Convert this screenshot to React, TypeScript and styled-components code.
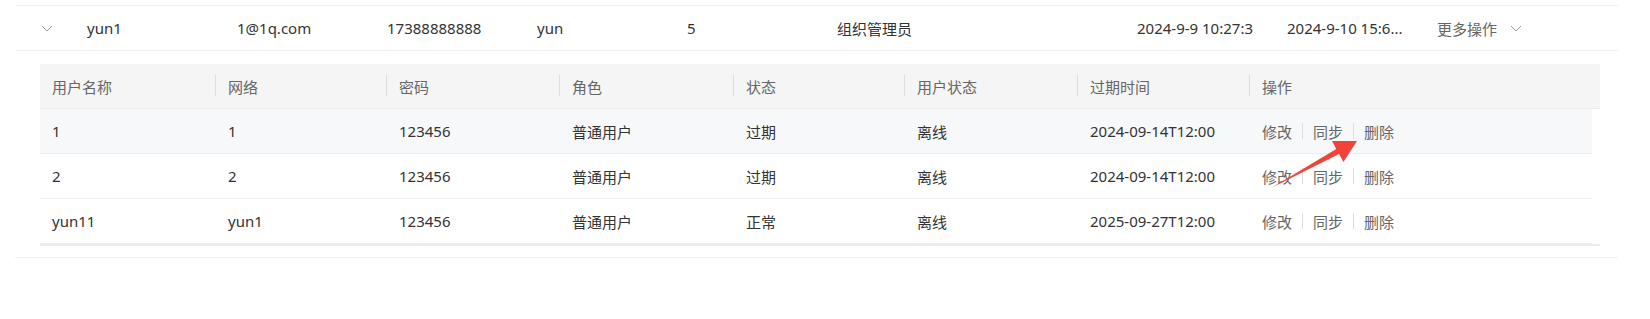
import styled, { createGlobalStyle } from "styled-components";

const GlobalStyle = createGlobalStyle`
  html, body {
    margin: 0;
    padding: 0;
    background: #ffffff;
  }
  body {
    font-family: "Noto Sans", "Noto Sans CJK SC", sans-serif;
    font-size: 15px;
    color: #333333;
  }
`;

const Page = styled.div`
  position: relative;
  width: 1650px;
  height: 319px;
  padding-top: 5px;
  box-sizing: border-box;
`;

const Outer = styled.div`
  margin-left: 15px;
  width: 1603px;
`;

const OuterRow = styled.div`
  display: grid;
  grid-template-columns: 56px 150px 150px 150px 150px 150px 300px 150px 150px 1fr;
  height: 44px;
  align-items: center;
  border-top: 1px solid #f0f0f0;
  border-bottom: 1px solid #f0f0f0;
`;

const OuterCell = styled.div<{ $muted?: boolean }>`
  padding-left: 16px;
  color: ${(p) => (p.$muted ? "#666666" : "#333333")};
  white-space: nowrap;
  overflow: hidden;
  display: flex;
  align-items: center;
  gap: 13px;
`;

const ExpandCell = styled.div`
  display: flex;
  align-items: center;
  padding-left: 26px;
`;

const Expanded = styled.div`
  padding: 13px 18px 11px 25px;
  border-bottom: 1px solid #f0f0f0;
`;

const Inner = styled.div`
  width: 1560px;
`;

const innerCols = "176px 171px 173px 174px 171px 173px 172px 1fr";

const HeadRow = styled.div`
  display: grid;
  grid-template-columns: ${innerCols};
  height: 44px;
  align-items: center;
  background: #f5f5f5;
  border-bottom: 1px solid #ececec;
`;

const HeadCell = styled.div<{ $sep?: boolean }>`
  position: relative;
  padding-left: 12px;
  color: #666666;
  &::after {
    content: "";
    display: ${(p) => (p.$sep ? "block" : "none")};
    position: absolute;
    right: 0;
    top: 50%;
    width: 1px;
    height: 21px;
    margin-top: -11px;
    background: #dedede;
  }
`;

const BodyRow = styled.div<{ $hover?: boolean }>`
  display: grid;
  grid-template-columns: ${innerCols};
  width: 1552px;
  height: 44px;
  align-items: center;
  background: ${(p) => (p.$hover ? "#f7f8fa" : "#ffffff")};
  border-bottom: 1px solid #eeeeee;
  &:last-of-type {
    border-bottom: none;
  }
`;

const BodyCell = styled.div`
  padding-left: 12px;
  color: #333333;
  white-space: nowrap;
`;

const Actions = styled.div`
  display: flex;
  align-items: center;
  padding-left: 12px;
`;

const ActionLink = styled.span`
  color: #666666;
  cursor: pointer;
`;

const ActionSep = styled.span`
  width: 1px;
  height: 16px;
  margin: 0 10px;
  background: #dddddd;
`;

const BottomBar = styled.div`
  height: 2px;
  background: #ebebeb;
`;

const Annotation = styled.svg`
  position: absolute;
  left: 1260px;
  top: 130px;
  pointer-events: none;
`;

const Chevron = ({ color = "#999999" }: { color?: string }) => (
  <svg width="12" height="7" viewBox="0 0 12 7" fill="none">
    <path d="M1 1 L6 6 L11 1" stroke={color} strokeWidth="1" />
  </svg>
);

type SubUser = {
  name: string;
  net: string;
  pwd: string;
  role: string;
  state: string;
  online: string;
  expire: string;
};

const subUsers: SubUser[] = [
  { name: "1", net: "1", pwd: "123456", role: "普通用户", state: "过期", online: "离线", expire: "2024-09-14T12:00" },
  { name: "2", net: "2", pwd: "123456", role: "普通用户", state: "过期", online: "离线", expire: "2024-09-14T12:00" },
  { name: "yun11", net: "yun1", pwd: "123456", role: "普通用户", state: "正常", online: "离线", expire: "2025-09-27T12:00" },
];

const headers = ["用户名称", "网络", "密码", "角色", "状态", "用户状态", "过期时间", "操作"];

export default function App() {
  return (
    <Page>
      <GlobalStyle />
      <Outer>
        <OuterRow>
          <ExpandCell>
            <Chevron />
          </ExpandCell>
          <OuterCell>yun1</OuterCell>
          <OuterCell>1@1q.com</OuterCell>
          <OuterCell>17388888888</OuterCell>
          <OuterCell>yun</OuterCell>
          <OuterCell>5</OuterCell>
          <OuterCell>组织管理员</OuterCell>
          <OuterCell>2024-9-9 10:27:3</OuterCell>
          <OuterCell>2024-9-10 15:6...</OuterCell>
          <OuterCell $muted>
            更多操作
            <Chevron />
          </OuterCell>
        </OuterRow>
        <Expanded>
          <Inner>
            <HeadRow>
              {headers.map((h, i) => (
                <HeadCell key={h} $sep={i < headers.length - 1}>
                  {h}
                </HeadCell>
              ))}
            </HeadRow>
            {subUsers.map((u, i) => (
              <BodyRow key={u.name} $hover={i === 0}>
                <BodyCell>{u.name}</BodyCell>
                <BodyCell>{u.net}</BodyCell>
                <BodyCell>{u.pwd}</BodyCell>
                <BodyCell>{u.role}</BodyCell>
                <BodyCell>{u.state}</BodyCell>
                <BodyCell>{u.online}</BodyCell>
                <BodyCell>{u.expire}</BodyCell>
                <Actions>
                  <ActionLink>修改</ActionLink>
                  <ActionSep />
                  <ActionLink>同步</ActionLink>
                  <ActionSep />
                  <ActionLink>删除</ActionLink>
                </Actions>
              </BodyRow>
            ))}
            <BottomBar />
          </Inner>
        </Expanded>
      </Outer>
      {/* red annotation arrow drawn over the table */}
      <Annotation width="110" height="70" viewBox="1260 130 110 70">
        <polygon
          points="1271,188 1336.3,148.9 1332,141 1357,141 1343.4,162 1339.1,154.1"
          fill="#f2433b"
        />
      </Annotation>
    </Page>
  );
}
